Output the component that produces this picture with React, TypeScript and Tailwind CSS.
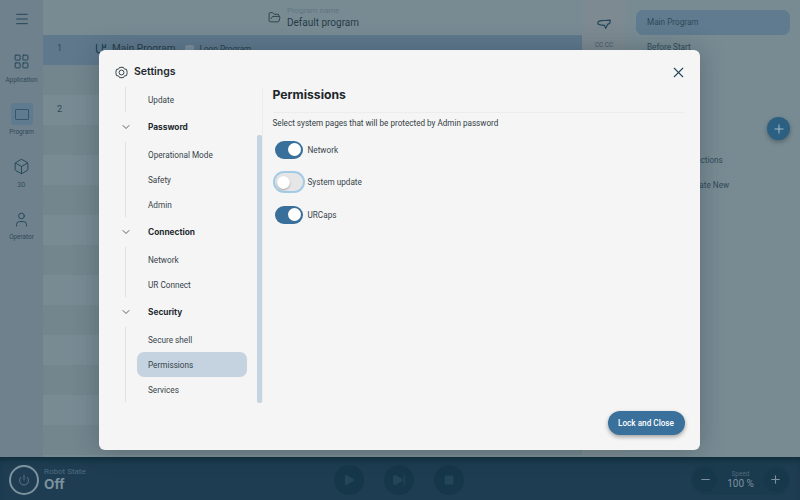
import { Box, ChevronDown, FolderOpen, LayoutGrid, Menu, Minus, Play, Plus, Power, SkipForward, Square, User, X } from "lucide-react";

const navGroups = [
  { items: ["Update"] },
  { title: "Password", items: ["Operational Mode", "Safety", "Admin"] },
  { title: "Connection", items: ["Network", "UR Connect"] },
  { title: "Security", items: ["Secure shell", "Permissions", "Services"] },
];

const permissions = [
  { label: "Network", on: true },
  { label: "System update", on: false },
  { label: "URCaps", on: true },
];

function RailItem({ label, active, children }: { label: string; active?: boolean; children: React.ReactNode }) {
  return (
    <div className="flex h-[52.5px] flex-col items-center pt-[3px]">
      <div className={`flex size-[22px] items-center justify-center rounded-[3px] ${active ? "bg-[#5f7b90]" : ""}`}>{children}</div>
      <span className="mt-[3px] text-[6.4px] leading-[9px] text-[#2f4a58]">{label}</span>
    </div>
  );
}

function GearIcon() {
  return (
    <svg width="13" height="13" viewBox="0 0 24 24" fill="none" stroke="#26343c" strokeWidth="1.7" strokeLinejoin="round">
      <path d="M8.5 2.500h7l2 3.200 3.800.6 1.200 5.700-1.200 5.700-3.800.6-2 3.200h-7l-2-3.200-3.800-.6L1.500 12l1.200-5.700 3.800-.6z" />
      <circle cx="12" cy="12" r="4.500" />
    </svg>
  );
}

function Toggle({ on }: { on: boolean }) {
  if (on) {
    return (
      <div className="flex h-[18px] w-[28px] items-center justify-end rounded-full bg-[#38709b] pr-[2px]">
        <div className="size-[13px] rounded-full bg-white" />
      </div>
    );
  }
  return (
    <div className="flex h-[18px] w-[28px] items-center rounded-full bg-[#e6e6e6] pl-[2px] ring-2 ring-[#a3cbe6]">
      <div className="size-[13px] rounded-full bg-white shadow-[0_1px_2px_rgba(0,0,0,0.3)]" />
    </div>
  );
}

function RoundButton({ children }: { children: React.ReactNode }) {
  return <div className="flex size-[30px] items-center justify-center rounded-full bg-[#163749]">{children}</div>;
}

function SettingsDialog() {
  return (
    <div className="absolute top-[50px] left-[99px] flex h-[400px] w-[600.5px] flex-col rounded-[6px] bg-[#f5f5f5] shadow-[0_0_26px_rgba(30,50,60,0.32)]">
      <div className="flex h-[37px] shrink-0 items-center justify-between pr-[13px] pl-[16px]">
        <div className="mt-[7px] flex items-center gap-[6px]">
          <GearIcon />
          <span className="text-[10.500px] leading-[14px] font-semibold text-[#1f2a30]" style={{ fontFamily: "Inter, sans-serif" }}>Settings</span>
        </div>
        <X size={17} strokeWidth={1.5} className="mt-[7px] text-[#24485a]" />
      </div>
      <div className="flex min-h-0 flex-1">
        <div className="relative h-[316px] w-[163.500px] shrink-0 border-r border-[#ececec]">
          {navGroups.map((group, i) => (
            <div key={i}>
              {group.title && (
                <div className="flex h-[30px] items-center pl-[21px]">
                  <ChevronDown size={12} strokeWidth={1.5} className="text-[#24343c]" />
                  <span className="ml-[16px] text-[8.300px] font-bold text-[#1f2a30]" style={{ fontFamily: "Inter, sans-serif" }}>{group.title}</span>
                </div>
              )}
              <div className="ml-[26px] border-l border-[#dde1e3] pl-[11px]">
                {group.items.map((item) => (
                  <div key={item} className={`flex h-[25px] w-[110px] items-center rounded-[7px] pt-[2px] pl-[11px] text-[8.200px] text-[#37444b] ${item === "Permissions" ? "bg-[#c4d3df]" : ""}`}>
                    {item}
                  </div>
                ))}
              </div>
            </div>
          ))}
          <div className="absolute top-[48px] right-[0px] h-[268px] w-[5px] rounded-[2px] bg-[#c4d4e1]" />
        </div>
        <div className="flex min-w-0 flex-1 flex-col pr-[15px] pl-[10px]">
          <h2 className="flex h-[25.500px] shrink-0 items-center border-b border-[#ececec] pb-[8px] text-[12.200px] font-bold text-[#1c262b]" style={{ fontFamily: "Inter, sans-serif" }}>
            Permissions
          </h2>
          <p className="mt-[5px] text-[8.150px] leading-[11px] text-[#333d43]">Select system pages that will be protected by Admin password</p>
          <div className="mt-[5px] flex flex-col pl-[2px]">
            {permissions.map((p) => (
              <div key={p.label} className="flex h-[32.500px] items-center gap-[5px]">
                <Toggle on={p.on} />
                <span className="text-[8.200px] text-[#37444b]">{p.label}</span>
              </div>
            ))}
          </div>
          <div className="mt-auto mb-[15px] flex justify-end">
            <button className="h-[24px] w-[77px] rounded-full bg-[#3a719c] text-[8.200px] font-medium text-white shadow-[0_2px_4px_rgba(0,0,0,0.35)]">
              Lock and Close
            </button>
          </div>
        </div>
      </div>
    </div>
  );
}

export default function App() {
  const rows = [0, 1, 2, 3, 4, 5, 6, 7, 8, 9, 10, 11, 12];
  return (
    <div className="relative flex h-[500px] w-[800px] flex-col overflow-hidden bg-[#788b93] text-[#2f4a58]" style={{ fontFamily: "Roboto, sans-serif" }}>
      <div className="flex min-h-0 flex-1">
        <aside className="flex w-[43px] shrink-0 flex-col items-center bg-[#6f818c]">
          <Menu size={16} strokeWidth={1.5} className="mt-[11px] mb-[20.500px] text-[#24485a]" />
          <RailItem label="Application"><LayoutGrid size={17} strokeWidth={1.4} className="text-[#24485a]" /></RailItem>
          <RailItem label="Program" active><div className="h-[11px] w-[14px] rounded-[1px] border border-[#36566a]" /></RailItem>
          <RailItem label="3D"><Box size={17} strokeWidth={1.4} className="text-[#24485a]" /></RailItem>
          <RailItem label="Operator"><User size={17} strokeWidth={1.4} className="text-[#24485a]" /></RailItem>
        </aside>
        <main className="flex min-w-0 flex-1 flex-col">
          <div className="flex h-[35px] shrink-0 items-center justify-center gap-[6px] pl-[2px]">
            <FolderOpen size={13} strokeWidth={1.5} className="text-[#24343c]" />
            <div>
              <div className="text-[8px] leading-[10px] text-[#5f7680]">Program name</div>
              <div className="text-[10px] leading-[13px] text-[#263c48]">Default program</div>
            </div>
          </div>
          <div className="flex h-[30px] shrink-0 items-center bg-[#5f788c] pb-[2px] pl-[14px] text-[9px]">
            <span className="w-[38px]">1</span>
            <svg width="12" height="12" viewBox="0 0 12 12" fill="none" stroke="#24485a" strokeWidth="1.300">
              <path d="M1.500 1v6a3 3 0 0 0 6 0V1M10.500 1v4M7.500 4h3" />
            </svg>
            <span className="ml-[5px] text-[10.100px] text-[#263c48]">Main Program</span>
            <div className="ml-[9px] size-[9px] rounded-[2px] bg-[#7d8f9e]" />
            <span className="ml-[6px] text-[8.200px] text-[#263c48]">Loop Program</span>
          </div>
          {rows.map((r) => (
            <div key={r} className={`flex h-[30px] shrink-0 items-center pl-[14px] text-[9px] ${r % 2 === 0 ? "bg-[#73858d]" : "bg-[#788b93]"}`}>
              {r === 1 ? "2" : ""}
            </div>
          ))}
        </main>
        <div className="flex w-[44px] shrink-0 flex-col items-center bg-[#7d8a91] pt-[18px]">
          <svg width="14" height="12" viewBox="0 0 16 12" fill="none" stroke="#24485a" strokeWidth="1.400" strokeLinejoin="round">
            <path d="M1 4C2 2 5 2.500 8 2l7-.5c.5 2.500-1 4.500-3 5L10 11 8.500 7.500 4 7 1 6z" />
          </svg>
          <span className="mt-[11px] text-[6.400px] text-[#42596a]">CC CC</span>
        </div>
        <div className="relative w-[174px] shrink-0 px-[10px] pt-[10px]">
          <div className="flex h-[25px] items-center rounded-[7px] bg-[#607a8f] pl-[11px] text-[8.200px]">Main Program</div>
          <div className="flex h-[25px] items-center pl-[11px] text-[8.200px]">Before Start</div>
          <div className="mt-[88px] flex h-[25px] items-center pl-[51px] text-[8.200px]">Functions</div>
          <div className="flex h-[25px] items-center pl-[51px] text-[8.200px]">Create New</div>
        </div>
      </div>
      <footer className="flex h-[43px] shrink-0 items-center bg-[#1e3d52] pt-[2px] pr-[10px] pl-[9px] shadow-[inset_0_6px_6px_-3px_rgba(10,40,50,0.8)]">
        <div className="flex w-[325px] items-center gap-[5px]">
          <div className="flex size-[30px] items-center justify-center rounded-full border-2 border-[#7d929e]">
            <Power size={12} strokeWidth={1.300} className="text-[#7d929e]" />
          </div>
          <div>
            <div className="text-[8px] leading-[10px] text-[#4f6b7d]">Robot State</div>
            <div className="text-[13.500px] leading-[15px] font-bold text-[#7d929e]" style={{ fontFamily: "Inter, sans-serif" }}>Off</div>
          </div>
        </div>
        <div className="flex gap-[20px]">
          <RoundButton><Play size={14} fill="#224559" strokeWidth={0} /></RoundButton>
          <RoundButton><SkipForward size={14} fill="#224559" className="text-[#224559]" /></RoundButton>
          <RoundButton><Square size={12} fill="#224559" strokeWidth={0} /></RoundButton>
        </div>
        <div className="ml-auto flex h-[30px] w-[99px] items-center justify-between rounded-full bg-[#1a3a4e] px-[2px]">
          <div className="flex size-[24px] items-center justify-center rounded-full bg-[#17384b]"><Minus size={13} className="text-[#7d929e]" /></div>
          <div className="text-center">
            <div className="text-[6.500px] leading-[8px] text-[#4f6b7d]">Speed</div>
            <div className="text-[10px] leading-[12px] text-[#7d929e]">100 %</div>
          </div>
          <div className="flex size-[24px] items-center justify-center rounded-full bg-[#17384b]"><Plus size={13} className="text-[#7d929e]" /></div>
        </div>
      </footer>
      <div className="absolute top-[117px] right-[10px] flex size-[23px] items-center justify-center rounded-full bg-[#2b6082] shadow-[0_2px_5px_rgba(0,0,0,0.3)]">
        <Plus size={14} strokeWidth={1.600} className="text-[#a9c3d2]" />
      </div>
      <SettingsDialog />
    </div>
  );
}
